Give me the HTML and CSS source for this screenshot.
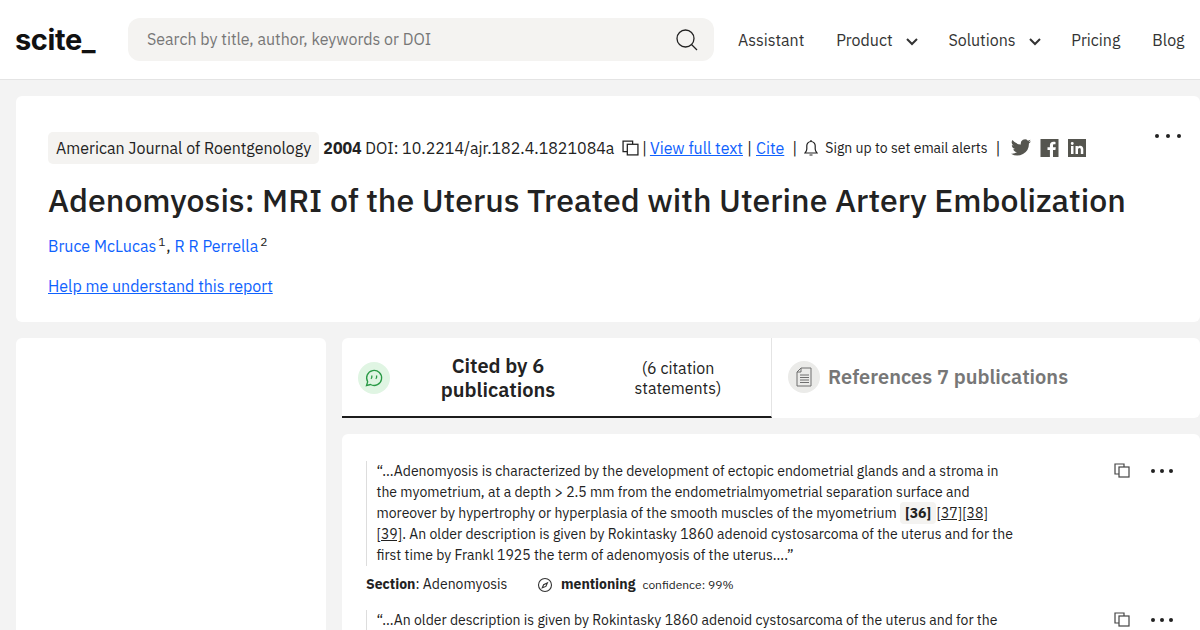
FILE: index.html
```html
<!DOCTYPE html>
<html lang="en">
<head>
<meta charset="utf-8">
<title>Adenomyosis: MRI of the Uterus</title>
<link rel="stylesheet" href="styles.css">
</head>
<body>
<header class="topbar">
  <div class="logo">scite_</div>
  <div class="search">
    <span class="search-text">Search by title, author, keywords or DOI</span>
    <svg class="search-icon" width="24" height="24" viewBox="0 0 24 24" fill="none" stroke="#222" stroke-width="1.300"><circle cx="10.500" cy="10.500" r="8.500"/><path d="M16.500 16.500l5.500 5.500"/></svg>
  </div>
  <nav class="nav">
    <span>Assistant</span>
    <span class="has-caret">Product <svg width="12" height="8" viewBox="0 0 12 8" fill="none" stroke="#333" stroke-width="2"><path d="M1 1l5 5 5-5"/></svg></span>
    <span class="has-caret">Solutions <svg width="12" height="8" viewBox="0 0 12 8" fill="none" stroke="#333" stroke-width="2"><path d="M1 1l5 5 5-5"/></svg></span>
    <span>Pricing</span>
    <span>Blog</span>
  </nav>
</header>
<main class="page">
  <section class="card head-card">
    <div class="meta">
      <span class="journal">American Journal of Roentgenology</span>
      <b class="year">2004</b>
      <span>DOI: 10.2214/ajr.182.4.1821084a</span>
      <svg class="copy" width="17" height="16" viewBox="0 0 16 15" fill="none" stroke="#222" stroke-width="1.200"><path d="M5 11H1V1h9v3"/><rect x="5" y="4" width="10" height="10"/></svg>
      <span class="sep sep-a">|</span><a href="#">View full text</a><span class="sep sep-b">|</span><a href="#">Cite</a><span class="sep sep-w">|</span>
      <svg class="bell" width="14" height="18" viewBox="0 0 14 18" fill="none" stroke="#222" stroke-width="1.200"><path d="M1 14h12c-1-1-1.800-2-1.800-4V7A4.200 4.200 0 0 0 7 2.500 4.200 4.200 0 0 0 2.800 7v3c0 2-.8 3-1.800 4zM7 1v1.500M5.500 16h3"/></svg>
      <span class="alerts">Sign up to set email alerts</span><span class="sep sep-s">|</span>
      <svg class="social tw" width="20" height="18" viewBox="0 0 24 21" fill="#55554f"><path d="M24 2.500c-.9.400-1.800.7-2.800.8a5 5 0 0 0 2.200-2.700c-1 .6-2 1-3.100 1.200a4.900 4.900 0 0 0-8.400 4.500A14 14 0 0 1 1.700.9a4.900 4.900 0 0 0 1.500 6.600c-.8 0-1.600-.2-2.200-.6 0 2.400 1.700 4.400 3.900 4.900-.7.200-1.500.2-2.200.1.600 2 2.400 3.400 4.600 3.400A9.900 9.900 0 0 1 0 17.300 14 14 0 0 0 21.500 5.200c1-.7 1.800-1.600 2.500-2.700z"/></svg>
      <svg class="social" width="19" height="18" viewBox="0 0 18 18"><path fill="#55554f" d="M0 0h18v18h-5.500v-7h2.400l.4-2.700h-2.800V6.600c0-.8.2-1.300 1.300-1.300H15V2.900c-.3 0-1.100-.1-2.100-.1-2.100 0-3.500 1.300-3.500 3.600v1.900H7V11h2.400v7H0z"/></svg>
      <svg class="social" width="18" height="18" viewBox="0 0 18 18"><path fill="#55554f" d="M0 0h18v18H0zm3 7v8h2.500V7zm1.250-4a1.400 1.400 0 1 0 0 2.900 1.400 1.400 0 0 0 0-2.900zM7.500 7v8H10v-4.200c0-1.100.5-1.800 1.500-1.800s1.300.7 1.300 1.800V15h2.500v-4.800c0-2.200-1.200-3.400-3-3.400-1.100 0-2 .5-2.400 1.300V7z" fill-rule="evenodd"/></svg>
    </div>
    <button class="dots dots-head" aria-label="More"><i></i><i></i><i></i></button>
    <h1>Adenomyosis: MRI of the Uterus Treated with Uterine Artery Embolization</h1>
    <p class="authors"><a href="#">Bruce McLucas</a><sup>1</sup> , <a href="#">R R Perrella</a><sup>2</sup></p>
    <a href="#" class="help">Help me understand this report</a>
  </section>
  <div class="columns">
    <aside class="card side"></aside>
    <div class="content">
      <div class="tabs">
        <div class="tab active">
          <span class="tab-icon green"><svg width="20" height="20" viewBox="0 0 20 20" fill="none" stroke="#2a9a46" stroke-width="1.300"><path d="M2.500 17.500l1.200-3.700A7.500 7.500 0 1 1 6.500 16.500z"/><path d="M7.800 7.500v1.800c0 .6-.3 1-.9 1.400M12.600 7.500v1.800c0 .6-.3 1-.9 1.400" stroke-width="1.300"/></svg></span>
          <b class="cited">Cited by 6<br>publications</b>
          <span class="statements">(6 citation<br>statements)</span>
        </div>
        <div class="tab inactive">
          <span class="tab-icon grey"><svg width="18" height="22" viewBox="0 0 18 22" fill="none" stroke="#6e6e6e" stroke-width="1"><path d="M6 2h10v18H2V6zM6 2v4H2M5 9h9M5 11.500h9M5 14h9M5 16.500h9"/></svg></span>
          <b class="refs">References 7 publications</b>
        </div>
      </div>
      <section class="card list">
        <article class="item">
          <blockquote>“...Adenomyosis is characterized by the development of ectopic endometrial glands and a stroma in the myometrium, at a depth &gt; 2.5 mm from the endometrialmyometrial separation surface and moreover by hypertrophy or hyperplasia of the smooth muscles of the myometrium <b class="cite-hl">[36]</b> <u>[37]</u><u>[38]</u> <u>[39]</u>. An older description is given by Rokintasky 1860 adenoid cystosarcoma of the uterus and for the first time by Frankl 1925 the term of adenomyosis of the uterus....”</blockquote>
          <div class="actions">
            <svg width="16" height="15" viewBox="0 0 16 15" fill="none" stroke="#444" stroke-width="1.200"><path d="M5 11H1V1h9v3"/><rect x="5" y="4" width="10" height="10"/></svg>
            <button class="dots" aria-label="More"><i></i><i></i><i></i></button>
          </div>
          <div class="info">
            <span class="section"><b>Section</b>: Adenomyosis</span>
            <svg width="16" height="16" viewBox="0 0 16 16" fill="none" stroke="#333" stroke-width="1.100"><circle cx="8" cy="8" r="6.500"/><path d="M5.300 10.700l1.300-3 3.800-1.800-1.500 3.500z"/></svg>
            <b class="mention">mentioning</b>
            <span class="conf">confidence: 99%</span>
          </div>
        </article>
        <article class="item">
          <blockquote>“...An older description is given by Rokintasky 1860 adenoid cystosarcoma of the uterus and for the</blockquote>
          <div class="actions">
            <svg width="16" height="15" viewBox="0 0 16 15" fill="none" stroke="#444" stroke-width="1.200"><path d="M5 11H1V1h9v3"/><rect x="5" y="4" width="10" height="10"/></svg>
            <button class="dots" aria-label="More"><i></i><i></i><i></i></button>
          </div>
        </article>
      </section>
    </div>
  </div>
</main>
</body>
</html>
```
FILE: styles.css
```css
* { box-sizing: border-box; }
html, body { margin: 0; height: 630px; overflow: hidden; }
body { background: #f3f3f3; font-family: "IBM Plex Sans", "Noto Sans", "Open Sans", sans-serif; color: #222; }
a { color: #0f62fe; }
.topbar { height: 80px; background: #fff; border-bottom: 1px solid #e4e4e4; display: flex; align-items: center; padding-left: 15px; }
.logo { width: 113px; font: 700 29px Inter, sans-serif; color: #111; letter-spacing: -.4px; }
.search { width: 586px; height: 43px; background: #f4f3f1; border-radius: 12px; display: flex; align-items: center; justify-content: space-between; padding: 0 15px 2px 19px; }
.search-icon { margin-top: 2px; }
.search-text { font-size: 16px; color: #777; }
.nav { display: flex; gap: 32px; margin-left: 24px; font-size: 16px; color: #333; white-space: nowrap; }
.has-caret svg { margin-left: 10px; }
.nav .has-caret { margin-right: -2px; }
.page { padding: 16px 0 0 16px; width: 1200px; }
.card { background: #fff; border-radius: 6px; }
.head-card { height: 226px; padding: 36px 32px 0; position: relative; }
.meta { display: flex; align-items: center; height: 32px; font-size: 16px; white-space: nowrap; }
.journal { background: #f4f3f1; padding: 0 8px; height: 32px; line-height: 32px; border-radius: 5px; margin-right: 4px; }
.year { margin-right: 3.500px; }
.copy { margin-left: 7.500px; }
.sep { margin: 0 3px; }
.sep-a { margin: 0 3px; }
.sep-b { margin: 0 4px; }
.sep-w { margin: 0 7px 0 8px; }
.sep-s { margin: 0 10.500px 0 8px; }
.alerts { font-size: 14px; margin-left: 7px; }
.social { margin-right: 9px; }
.dots { border: 0; background: none; padding: 0; display: flex; gap: 5px; align-items: center; }
.dots i { width: 4px; height: 4px; border-radius: 50%; background: #222; }
.dots-head { position: absolute; top: 38px; right: 19px; gap: 7px; }
h1 { margin: 15px 0 0; font-size: 32px; line-height: 42px; font-weight: 500; color: #222; }
.authors { margin: 13px 0 0; font-size: 16px; line-height: 24px; }
.authors a { text-decoration: none; }
sup { font-size: 12px; line-height: 0; margin-left: 2px; margin-right: -3px; }
.help { display: block; margin-top: 16px; font-size: 16px; line-height: 24px; }
.columns { display: flex; gap: 16px; margin-top: 16px; }
.side { width: 310px; height: 400px; }
.content { flex: 1; }
.tabs { display: flex; height: 80px; }
.tab { display: flex; align-items: center; padding-left: 16px; background: #fff; }
.tab.active { width: 430px; border-bottom: 2px solid #1c1c1c; border-right: 1px solid #e4e4e4; border-radius: 6px 0 0 0; padding-top: 1px; }
.tab.inactive { flex: 1; border-radius: 0 6px 6px 0; }
.tab-icon { width: 32px; height: 32px; border-radius: 50%; display: flex; align-items: center; justify-content: center; flex: none; }
.green { background: #e0f5e3; }
.grey { background: #ebebe9; }
.inactive .tab-icon { margin-bottom: 2px; }
.cited { width: 216px; text-align: center; font-size: 20px; line-height: 24px; font-weight: 600; }
.statements { font-size: 16px; line-height: 20px; text-align: center; width: 100px; margin-left: 22px; }
.refs { font-size: 20px; font-weight: 600; color: #777; margin: 0 0 4px 8px; }
.list { margin-top: 16px; height: 300px; padding: 27px 0 0 24px; }
.item { position: relative; margin-bottom: 15px; }
blockquote { margin: 0; width: 647.500px; padding-left: 9.500px; border-left: 1px solid #ddd; font-size: 14px; line-height: 21px; }
.cite-hl { background: #f4f3f1; padding: 2px 5px; margin-right: -3px; border-radius: 4px; }
.actions { position: absolute; top: 2px; left: 748px; display: flex; gap: 21px; align-items: center; }
.info { display: flex; align-items: center; margin-top: 8px; font-size: 14px; line-height: 21px; }
.section { width: 171px; }
.mention { margin-left: 8px; }
.conf { font-size: 12px; margin-left: 7px; }
```
